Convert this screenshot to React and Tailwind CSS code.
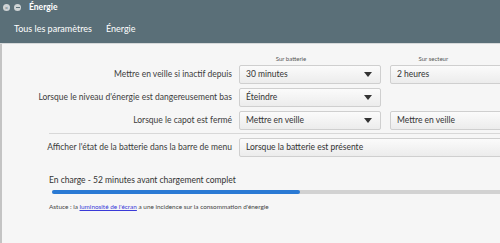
import React from 'react';

const Select = ({ value, arrow = true, className = '' }) => (
    <div
        className={`flex h-[19px] items-center justify-between rounded-[2px] border border-[#cfcfcf] bg-gradient-to-b from-[#fbfbfb] to-[#ececec] pl-[6px] pr-[8px] text-[8.5px] text-[#333] ${className}`}
    >
        <span>{value}</span>
        {arrow && (
            <svg width="8" height="5" viewBox="0 0 8 5">
                <path d="M0 0 L8 0 L4 5 Z" fill="#333" />
            </svg>
        )}
    </div>
);

const Row = ({ label, children }) => (
    <div className="flex items-center">
        <div className="w-[230px] shrink-0 text-right text-[8.5px] text-[#3c3c3c]">{label}</div>
        <div className="ml-[7px] flex gap-[9px]">{children}</div>
    </div>
);

const App = () => {
    return (
        <div
            className="flex h-[243px] w-[500px] flex-col overflow-hidden bg-[#f6f6f6]"
            style={{ fontFamily: 'Lato, "Noto Sans", sans-serif' }}
        >
            {/* Header */}
            <div className="h-[44px] shrink-0 border-b border-[#d6d9da] bg-[#5a6f78] text-white">
                <div className="flex h-[15px] items-center pl-[3px]">
                    <span className="flex h-[7px] w-[7px] items-center justify-center rounded-full bg-[#cfd4d6] text-[6px] leading-none text-[#5a6f78]">×</span>
                    <span className="ml-[4px] flex h-[7px] w-[7px] items-center justify-center rounded-full bg-[#cfd4d6]">
                        <span className="h-[1px] w-[4px] bg-[#5a6f78]" />
                    </span>
                    <span className="ml-[8px] text-[8.5px] font-bold">Énergie</span>
                </div>
                <div className="flex h-[28px] items-center pl-[14px] text-[9px]">
                    <span>Tous les paramètres</span>
                    <span className="ml-[14px]">Énergie</span>
                </div>
            </div>

            {/* Content */}
            <div className="flex flex-1 flex-col border-l-2 border-[#c4c4c4]">
                <div className="mt-[10px] flex text-[6px] text-[#555]">
                    <div className="w-[235px]" />
                    <div className="w-[141px] text-center">Sur batterie</div>
                    <div className="ml-[9px] w-[141px] text-center">Sur secteur</div>
                </div>

                <div className="mt-[2px] flex flex-col gap-[4px]">
                    <Row label="Mettre en veille si inactif depuis">
                        <Select value="30 minutes" className="w-[142px]" />
                        <Select value="2 heures" className="w-[142px]" />
                    </Row>
                    <Row label="Lorsque le niveau d'énergie est dangereusement bas">
                        <Select value="Éteindre" className="w-[142px]" />
                    </Row>
                    <Row label="Lorsque le capot est fermé">
                        <Select value="Mettre en veille" className="w-[142px]" />
                        <Select value="Mettre en veille" className="w-[142px]" />
                    </Row>
                </div>

                <div className="ml-[47px] mt-[3px] h-[1px] w-[460px] bg-[#d8d8d8]" />

                <div className="mt-[4px]">
                    <Row label="Afficher l'état de la batterie dans la barre de menu">
                        <Select value="Lorsque la batterie est présente" arrow={false} className="w-[300px]" />
                    </Row>
                </div>

                <div className="ml-[47px] mt-[17px] text-[8.5px] text-[#333]">
                    En charge - 52 minutes avant chargement complet
                </div>
                <div className="ml-[50px] mt-[3px] h-[4px] w-[460px] rounded-full bg-[#d2d2d2]">
                    <div className="h-full w-[248px] rounded-full bg-[#2a7ad4]" />
                </div>
                <div className="ml-[47px] mt-[8px] text-[6.4px] text-[#444]">
                    Astuce : la <span className="text-[#3a3ad8] underline">luminosité de l'écran</span> a une incidence sur la consommation d'énergie
                </div>
            </div>
        </div>
    );
};

export default App;
